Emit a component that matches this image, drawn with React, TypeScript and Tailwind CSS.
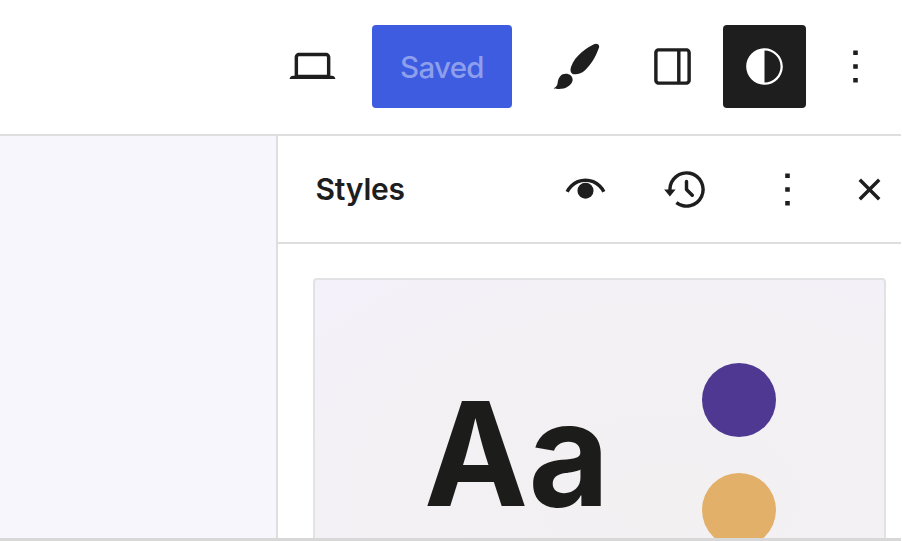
import type { ReactNode } from 'react';

function Icon({ children }: { children: ReactNode }) {
  return (
    <svg viewBox="0 0 24 24" className="block size-[55px] shrink-0" fill="currentColor" aria-hidden="true">
      {children}
    </svg>
  );
}

function More() {
  return (
    <Icon>
      <path d="M13 19h-2v-2h2v2zm0-6h-2v-2h2v2zm0-6h-2V5h2v2z" />
    </Icon>
  );
}

function Brush() {
  return (
    <svg viewBox="0 13 165 165" className="block size-[55px] shrink-0" fill="currentColor" aria-hidden="true">
      <path d="M150 29C154 32 155 37 151 44C143 67 129 90 112 106C100 117 86 121 74 118C67 114 66 106 69 97C75 79 87 65 101 53C114 42 127 34 138 29C142 26 147 27 150 29Z" />
      <path d="M53 117C66 117 74 125 74 136C72 153 52 163 33 163C28 163 22 163 17 161C25 157 28 152 29 144C31 127 40 117 53 117Z" />
    </svg>
  );
}

function TopBar() {
  return (
    <header className="flex h-[136px] w-[901px] shrink-0 items-center border-b-2 border-[#dedede] pb-[1px] pl-[285px]">
      <button aria-label="View">
        <Icon>
          <path d="M20.5 16h-.7V8c0-1.1-.9-2-2-2H6.2c-1.1 0-2 .9-2 2v8h-.7c-.8 0-1.5.7-1.5 1.5h20c0-.8-.7-1.5-1.5-1.5zM5.7 8c0-.3.2-.5.5-.5h11.6c.3 0 .5.2.5.5v7.6H5.7V8z" />
        </Icon>
      </button>
      <button className="ml-8 h-[82.5px] w-[140px] rounded-[4px] bg-[#3d5ce0] pt-px text-[29.5px] font-medium tracking-[-0.7px] text-[#8d9eec]">
        Saved
      </button>
      <button aria-label="Style Book" className="ml-9">
        <Brush />
      </button>
      <button aria-label="Settings" className="ml-[42px]">
        <Icon>
          <path d="M18 4H6c-1.1 0-2 .9-2 2v12c0 1.1.9 2 2 2h12c1.1 0 2-.9 2-2V6c0-1.1-.9-2-2-2zm-4 14.5H6c-.3 0-.5-.2-.5-.5V6c0-.3.2-.5.5-.5h8v13zm4.5-.5c0 .3-.2.5-.5.5h-2.5v-13H18c.3 0 .5.2.5.5v12z" />
        </Icon>
      </button>
      <button aria-label="Styles" className="ml-[23px] flex size-[82.5px] items-center justify-center rounded-[4px] bg-[#1e1e1e] text-white">
        <Icon>
          <path d="M12 4c-4.4 0-8 3.6-8 8s3.6 8 8 8 8-3.6 8-8-3.6-8-8-8zm0 15V5c3.9 0 7 3.1 7 7s-3.1 7-7 7z" />
        </Icon>
      </button>
      <button aria-label="Options" className="ml-[22.5px]">
        <More />
      </button>
    </header>
  );
}

function PanelHeader() {
  return (
    <div className="flex h-[108px] w-[623px] shrink-0 items-center border-b-2 border-[#dedede] pl-[37.5px]">
      <h2 className="w-[242.5px] pt-px text-[30px] font-semibold tracking-[-0.2px]">Styles</h2>
      <button aria-label="Preview">
        <Icon>
          <path d="M4 13C4 13 6.2 8 12 8s8 5 8 5" fill="none" stroke="currentColor" strokeWidth="1.5" />
          <circle cx="12" cy="12.5" r="3.5" />
        </Icon>
      </button>
      <button aria-label="Revisions" className="ml-[46px]">
        <Icon>
          <path d="M5.5 12h1.75l-2.5 3-2.5-3H4a8 8 0 113.134 6.35l.907-1.194A6.5 6.5 0 105.5 12zm9.53 1.97l-2.28-2.28V8.5a.75.75 0 00-1.5 0V12a.747.747 0 00.218.529l1.282-.84-1.28.842 2.5 2.5a.75.75 0 101.06-1.061z" />
        </Icon>
      </button>
      <button aria-label="More" className="ml-[45.5px]">
        <More />
      </button>
      <button aria-label="Close Styles" className="ml-[27px]">
        <Icon>
          <path d="M12 13.06l3.712 3.713 1.061-1.06L13.061 12l3.712-3.712-1.06-1.06L12 10.938 8.288 7.227l-1.061 1.06L10.939 12l-3.712 3.712 1.06 1.061L12 13.061z" />
        </Icon>
      </button>
    </div>
  );
}

export default function App() {
  return (
    <div className="flex h-[541px] w-[902px] flex-col overflow-hidden bg-white font-['Inter',sans-serif] text-[#1e1e1e]">
      <TopBar />
      <main className="flex min-h-0 flex-1">
        <div className="w-[278px] shrink-0 border-r-2 border-[#dedede] bg-[#f7f6fd]" />
        <aside className="flex min-w-0 flex-1 flex-col overflow-hidden">
          <PanelHeader />
          <div className="ml-[35px] mt-[34px] flex h-[340px] w-[573px] shrink-0 rounded-[4px] border-2 border-[#e2e2e4] bg-[radial-gradient(ellipse_at_62%_65%,#f3f0f2_0%,#f3f1f4_60%,#f4f1fb_100%)] pl-[109px]">
            <div className="mt-[119px] h-[110px] w-[278px] shrink-0 origin-left scale-x-[0.965] text-[144.5px] leading-[110px] font-bold tracking-[0.5px] text-[#1c1c1a]">
              Aa
            </div>
            <div className="mt-[83px] flex flex-col gap-[36px]">
              <div className="size-[74px] rounded-full bg-[#4f3892]" />
              <div className="size-[74px] rounded-full bg-[#e2b068]" />
            </div>
          </div>
        </aside>
      </main>
      <div className="h-[3px] w-[901px] shrink-0 bg-[#d8d8d8]" />
    </div>
  );
}
